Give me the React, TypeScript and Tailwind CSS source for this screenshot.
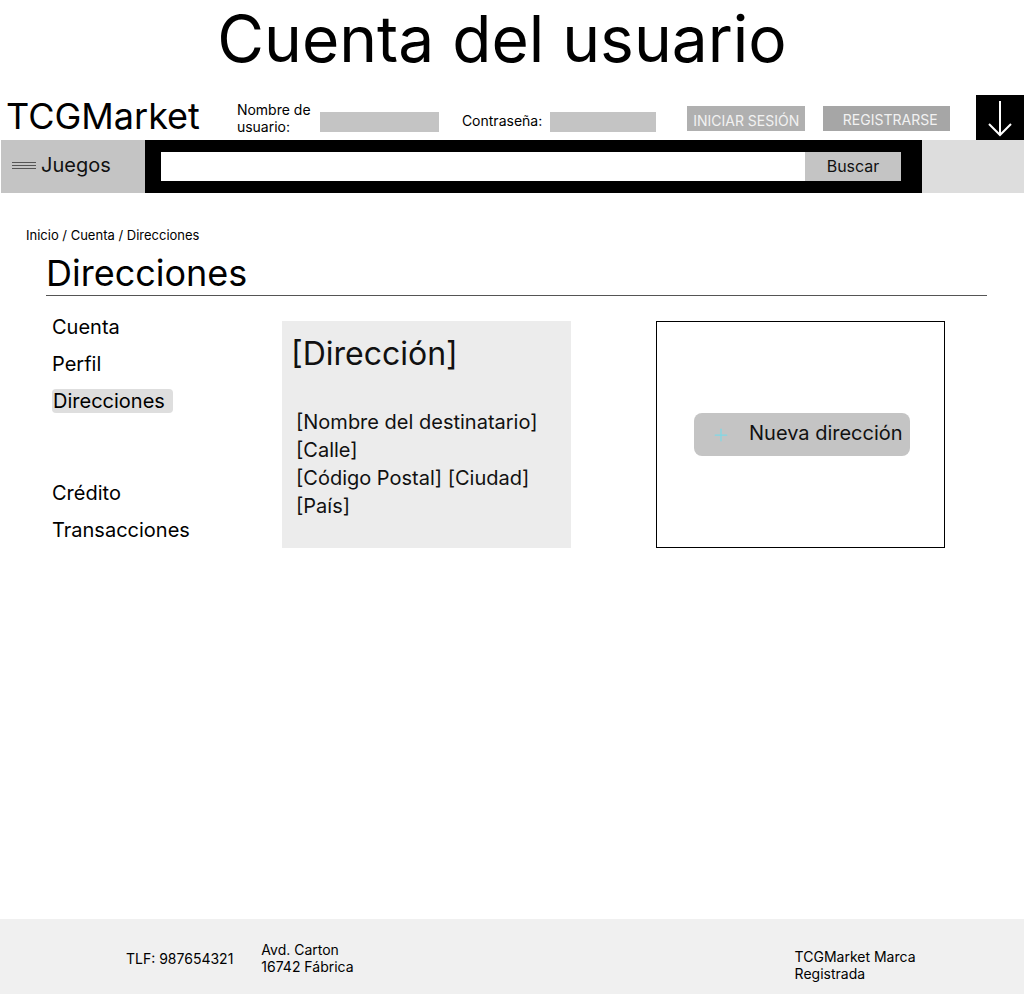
import { Plus } from 'lucide-react';

const font = { fontFamily: 'Inter, "Noto Sans", sans-serif' };

function Header() {
  return (
    <div className="flex h-[52px] items-stretch">
      <div className="pl-[6px] pt-[6px] text-[36px] leading-[44px] text-black">TCGMarket</div>
      <div className="ml-[37px] mt-[13px] w-[80px] text-[14px] leading-[17px] text-black">
        Nombre de
        <br />
        usuario:
      </div>
      <div className="ml-[3px] mt-[24px] h-[20px] w-[119px] bg-[#c4c4c4]" />
      <div className="ml-[23px] mt-[23px] text-[14px] leading-[20px] text-black">Contraseña:</div>
      <div className="ml-[8px] mt-[24px] h-[20px] w-[106px] bg-[#c4c4c4]" />
      <div className="ml-[31px] mt-[18px] flex h-[25px] w-[118px] items-end justify-center bg-[#b0b0b0] pb-[1px] text-[14px] leading-[18px] text-[#f2f2f2]">
        INICIAR SESIÓN
      </div>
      <div className="ml-[18px] mt-[18px] flex h-[25px] w-[127px] items-end justify-center bg-[#a6a6a6] pb-[2px] pl-[7px] text-[14px] leading-[18px] text-[#f2f2f2]">
        REGISTRARSE
      </div>
      <div className="ml-auto mt-[7px] flex w-[48px] items-center justify-center bg-black">
        <svg width="28" height="40" viewBox="0 0 28 40" fill="none" stroke="white" strokeWidth="2">
          <path d="M14 3 V37" />
          <path d="M3 26 L14 37 L25 26" />
        </svg>
      </div>
    </div>
  );
}

function NavBar() {
  return (
    <div className="flex h-[53px]">
      <div className="ml-[1px] flex w-[144px] items-center bg-[#c4c4c4] pb-[3px] pl-[11px]">
        <div className="flex w-[24px] flex-col gap-[2px]">
          <div className="h-[1px] bg-[#555]" />
          <div className="h-[1px] bg-[#555]" />
          <div className="h-[1px] bg-[#555]" />
        </div>
        <span className="ml-[5px] text-[20px] leading-[24px] text-[#111]">Juegos</span>
      </div>
      <div className="flex w-[777px] items-center bg-black pl-[16px] pr-[21px]">
        <div className="h-[29px] flex-1 bg-white" />
        <div className="flex h-[29px] w-[96px] items-center justify-center bg-[#c4c4c4] pb-[1px] text-[16px] text-[#111]">
          Buscar
        </div>
      </div>
      <div className="flex-1 bg-[#dddddd]" />
    </div>
  );
}

function Sidebar() {
  const item = 'h-[37px] text-[20px] leading-[24px] text-black';
  return (
    <div className="-mt-[6px] w-[230px]">
      <div className={item}>Cuenta</div>
      <div className={item}>Perfil</div>
      <div className={item}>
        <span className="inline-block rounded-[4px] bg-[#dedede] pl-[1px] pr-[8px]">Direcciones</span>
      </div>
      <div className="h-[55px]" />
      <div className={item}>Crédito</div>
      <div className={item}>Transacciones</div>
    </div>
  );
}

function AddressCard() {
  return (
    <div className="h-[227px] w-[289px] bg-[#ececec] pl-[9px] pt-[13px]">
      <div className="text-[32px] leading-[40px] text-[#111]">[Dirección]</div>
      <div className="mt-[34px] pl-[5px] text-[20px] leading-[28px] text-[#111]">
        <div>[Nombre del destinatario]</div>
        <div>[Calle]</div>
        <div>[Código Postal] [Ciudad]</div>
        <div>[País]</div>
      </div>
    </div>
  );
}

function NewAddressBox() {
  return (
    <div className="ml-[85px] flex h-[227px] w-[289px] items-center justify-center border border-black">
      <div className="ml-[3px] flex h-[43px] w-[216px] items-center rounded-[8px] bg-[#c4c4c4] pb-[3px] pl-[17px]">
        <Plus size={20} strokeWidth={1.5} className="mt-[3px] text-[#7fd8e6]" />
        <span className="ml-[18px] text-[20px] leading-[24px] text-[#111]">Nueva dirección</span>
      </div>
    </div>
  );
}

function Footer() {
  return (
    <div className="flex h-[75px] bg-[#f0f0f0] text-[14px] leading-[17px] text-black">
      <div className="ml-[126px] mt-[31px]">TLF: 987654321</div>
      <div className="ml-[28px] mt-[22px]">
        Avd. Carton
        <br />
        16742 Fábrica
      </div>
      <div className="ml-[441px] mt-[29px]">
        TCGMarket Marca
        <br />
        Registrada
      </div>
    </div>
  );
}

export default function App() {
  return (
    <div className="flex h-[994px] w-[1024px] flex-col bg-white" style={font}>
      <div className="flex h-[88px] items-center justify-center pb-[10px] pr-[20px] text-[64px] leading-[76px] text-black">
        Cuenta del usuario
      </div>
      <Header />
      <NavBar />
      <div className="pl-[26px] pt-[34px] text-[13px] leading-[16px] text-black">Inicio / Cuenta / Direcciones</div>
      <div className="ml-[46px] mr-[37px] mt-[8px] border-b border-[#555] text-[36px] leading-[44px] text-black">
        Direcciones
      </div>
      <div className="mt-[25px] flex pl-[52px]">
        <Sidebar />
        <AddressCard />
        <NewAddressBox />
      </div>
      <div className="mt-auto">
        <Footer />
      </div>
    </div>
  );
}
